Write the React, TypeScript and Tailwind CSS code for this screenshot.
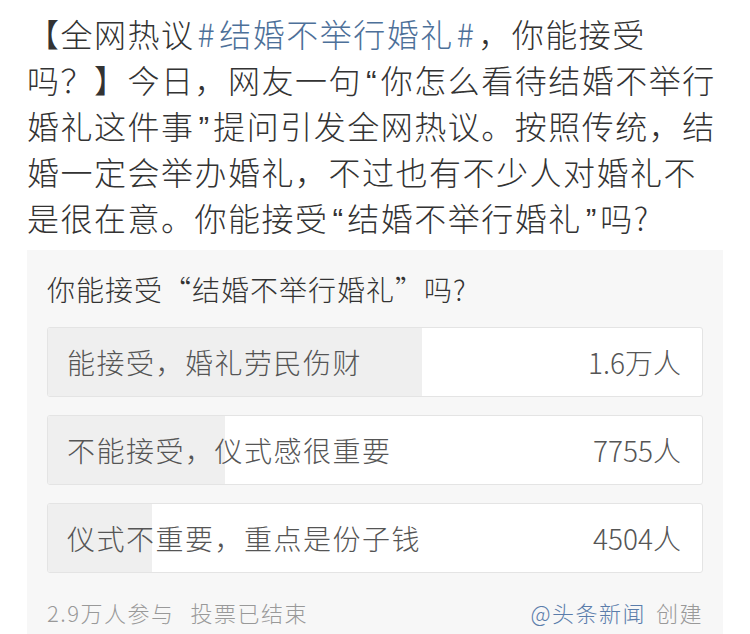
const options = [
  { label: "能接受，婚礼劳民伤财", count: "1.6万人", fill: 374 },
  { label: "不能接受，仪式感很重要", count: "7755人", fill: 177 },
  { label: "仪式不重要，重点是份子钱", count: "4504人", fill: 104 },
];

// narrow quotation marks, as in the reference
const Q = ({ c }: { c: string }) => (
  <span className="mx-[4px] font-['Liberation_Sans'] leading-[0] tracking-normal">{c}</span>
);

export default function App() {
  return (
    <div
      className="h-[634px] w-[750px] overflow-hidden bg-white font-light"
      style={{ fontFamily: '"Noto Sans CJK SC", "Noto Sans", sans-serif' }}
    >
      <div className="px-[27px] pt-[10px] text-[32px] leading-[46px] tracking-[1.5px] text-[#333] [&>div]:h-[46px] [&>div]:whitespace-nowrap">
        <div>
          【全网热议
          <span className="text-[#4d7099]">
            <span className="mx-[3px]">#</span>结婚不举行婚礼<span className="mx-[3px]">#</span>
          </span>
          ，你能接受
        </div>
        <div>
          吗？】今日，网友一句<Q c="“" />你怎么看待结婚不举行
        </div>
        <div>
          婚礼这件事<Q c="”" />提问引发全网热议。按照传统，结
        </div>
        <div>婚一定会举办婚礼，不过也有不少人对婚礼不</div>
        <div>
          是很在意。你能接受<Q c="“" />结婚不举行婚礼<Q c="”" />吗?
        </div>
      </div>

      <div className="mx-[27px] mt-[10px] bg-[#f7f7f7] px-[20px] pb-6 pt-[19px]">
        <div className="whitespace-nowrap text-[28px] leading-[40px] tracking-[1px] text-[#333]">
          你能接受“结婚不举行婚礼”吗?
        </div>

        <div className="mt-[18px] flex flex-col gap-[18px]">
          {options.map((o) => (
            <div
              key={o.label}
              className="relative flex h-[70px] items-center justify-between overflow-hidden rounded-[3px] border border-[#e4e4e4] bg-white pl-[19px] pr-[21px]"
            >
              <div
                className="absolute inset-y-0 left-0 bg-[#efefef]"
                style={{ width: o.fill }}
              />
              <span className="relative whitespace-nowrap text-[28px] tracking-[1.5px] text-[#555]">
                {o.label}
              </span>
              <span className="relative whitespace-nowrap text-[28px] text-[#555]">
                {o.count}
              </span>
            </div>
          ))}
        </div>

        <div className="mt-[24px] flex items-center justify-between text-[22px] leading-[30px] tracking-[1.5px]">
          <div className="text-[#999]">
            2.9万人参与<span className="ml-[16px]">投票已结束</span>
          </div>
          <div className="text-[#999]">
            <span className="text-[#5b7dab]">@头条新闻</span>
            <span className="ml-[10px]">创建</span>
          </div>
        </div>
      </div>
    </div>
  );
}
